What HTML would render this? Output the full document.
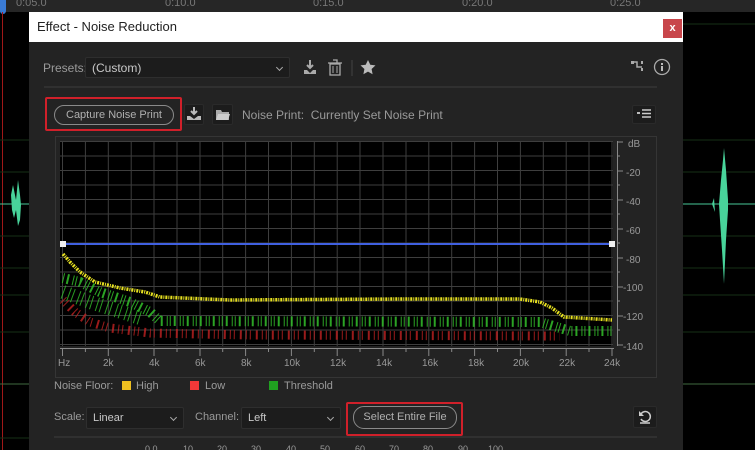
<!DOCTYPE html>
<html><head><meta charset="utf-8"><style>
*{margin:0;padding:0;box-sizing:border-box}
body{width:755px;height:450px;overflow:hidden;background:#000;font-family:"Liberation Sans",sans-serif;position:relative}
.abs{position:absolute}
.t{color:#9a9a9a;font-size:11px;position:absolute;white-space:nowrap}
.dd{position:absolute;background:#1c1c1c;border:1px solid #2e2e2e;border-radius:2px;color:#c8c8c8;font-size:11px;padding:4px 6px}
.car{position:absolute;right:7px;top:7px;width:5px;height:5px;border-right:1px solid #aaa;border-bottom:1px solid #aaa;transform:rotate(45deg)}
.pill{position:absolute;border:1px solid #8a8a8a;border-radius:11px;color:#b0b0b0;font-size:11px;text-align:center;background:#262626}
.red{position:absolute;border:2px solid #d0202a;border-radius:2px}
.ib{position:absolute;background:#1c1c1c;border:1px solid #2a2a2a;border-radius:2px}
</style></head><body>
<div class="abs" style="left:0;top:0;width:755px;height:12px;background:#262626"></div>
<div class="t" style="left:16px;top:-3px;color:#777">0:05.0</div>
<div class="t" style="left:165px;top:-3px;color:#777">0:10.0</div>
<div class="t" style="left:313px;top:-3px;color:#777">0:15.0</div>
<div class="t" style="left:462px;top:-3px;color:#777">0:20.0</div>
<div class="t" style="left:610px;top:-3px;color:#777">0:25.0</div>
<div class="abs" style="left:0;top:0;width:6px;height:14px;background:#3a7bd5;border-radius:0 0 3px 3px"></div>
<div class="abs" style="left:2px;top:12px;width:1px;height:438px;background:#a01818"></div>
<svg class="abs" style="left:0;top:0" width="755" height="450">
<g stroke="#163016">
<line x1="0" y1="140" x2="29" y2="140"/><line x1="0" y1="172" x2="29" y2="172"/><line x1="0" y1="236" x2="29" y2="236"/><line x1="0" y1="268" x2="29" y2="268"/><line x1="0" y1="295" x2="29" y2="295"/><line x1="0" y1="332" x2="29" y2="332"/><line x1="0" y1="438" x2="29" y2="438"/>
<line x1="683" y1="140" x2="755" y2="140"/><line x1="683" y1="172" x2="755" y2="172"/><line x1="683" y1="236" x2="755" y2="236"/><line x1="683" y1="268" x2="755" y2="268"/><line x1="683" y1="295" x2="755" y2="295"/><line x1="683" y1="332" x2="755" y2="332"/><line x1="683" y1="24" x2="755" y2="24"/>
</g>
<line x1="0" y1="384" x2="29" y2="384" stroke="#3f6a3f"/><line x1="683" y1="384" x2="755" y2="384" stroke="#3f6a3f"/>
<line x1="0" y1="204" x2="29" y2="204" stroke="#48c898"/><line x1="683" y1="204" x2="755" y2="204" stroke="#48c898"/>
<path d="M11 195 L13 185 L15 195 L16 200 L18 180 L20 195 L21 205 L20 220 L18 226 L16 210 L14 218 L12 210 Z" fill="#48d39a"/>
<path d="M719 204 L721 180 L723 160 L724 148 L726 170 L728 200 L728 210 L726 240 L724 284 L722 250 L720 220 Z M712 204 L714 198 L715 212 Z" fill="#48d39a"/>
</svg>

<div class="abs" style="left:29px;top:12px;width:654px;height:438px;background:#232323"></div>
<div class="abs" style="left:29px;top:12px;width:654px;height:30px;background:#fff"></div>
<div class="abs" style="left:37px;top:19px;font-size:13px;color:#222">Effect - Noise Reduction</div>
<div class="abs" style="left:663px;top:19px;width:19px;height:19px;background:#c8464b;color:#fff;font-size:11px;text-align:center;line-height:18px;font-weight:bold">x</div>

<div class="t" style="left:43px;top:61px;font-size:12px">Presets:</div>
<div class="dd" style="left:85px;top:57px;width:205px;height:21px;font-size:12px;padding:3px 6px">(Custom)<span class="car"></span></div>
<svg class="abs" style="left:302px;top:58px" width="80" height="20">
<path d="M8 2v8M5 7l3 3 3-3" stroke="#aaa" stroke-width="2" fill="none"/><path d="M2 12h3l3 3 3-3h3v4H2z" fill="#aaa"/>
<rect x="28" y="6" width="10" height="11" fill="none" stroke="#aaa" stroke-width="1.3"/><path d="M26 5h14M31 2h4v3" stroke="#aaa" fill="none" stroke-width="1.3"/><path d="M31 8v7M35 8v7" stroke="#aaa"/>
<line x1="50" y1="2" x2="50" y2="18" stroke="#333" stroke-width="2"/>
<path d="M66 2l2.3 4.8 5.2.6-3.9 3.6 1 5.2-4.6-2.6-4.6 2.6 1-5.2-3.9-3.6 5.2-.6z" fill="#bbb"/>
</svg>
<svg class="abs" style="left:630px;top:58px" width="42" height="20">
<rect x="1" y="3" width="3" height="3" fill="#aaa"/><path d="M4 4h3v5h5" stroke="#aaa" fill="none" stroke-width="1.5"/><rect x="11" y="3" width="2" height="3" fill="#aaa"/><rect x="11" y="10" width="2" height="3" fill="#aaa"/>
<circle cx="32" cy="9" r="7.5" stroke="#aaa" fill="none" stroke-width="1.3"/><rect x="31" y="8" width="2" height="5" fill="#bbb"/><rect x="31" y="5" width="2" height="2" fill="#bbb"/>
</svg>
<div class="abs" style="left:44px;top:86px;width:613px;height:2px;background:#303030"></div>

<div class="red" style="left:45px;top:97px;width:137px;height:34px"></div>
<div class="pill" style="left:54px;top:105px;width:120px;height:20px;line-height:18px">Capture Noise Print</div>
<div class="ib" style="left:184px;top:104px;width:20px;height:21px"></div>
<svg class="abs" style="left:186px;top:106px" width="16" height="16"><path d="M8 1v7M5 5l3 3 3-3" stroke="#bbb" stroke-width="2" fill="none"/><path d="M1 10h3l4 3 4-3h3v4H1z" fill="#bbb"/></svg>
<div class="ib" style="left:212px;top:104px;width:21px;height:21px"></div>
<svg class="abs" style="left:215px;top:108px" width="16" height="13"><path d="M1 2h5l1 2h7v8H1z" fill="#aaa"/><path d="M3 6h12l-2 6H1z" fill="#ccc"/></svg>
<div class="t" style="left:242px;top:108px;font-size:12px">Noise Print:&nbsp; Currently Set Noise Print</div>
<div class="ib" style="left:632px;top:105px;width:24px;height:19px"></div>
<svg class="abs" style="left:637px;top:109px" width="16" height="11"><rect x="0" y="3" width="3" height="2" fill="#bbb"/><path d="M5 1h9M5 4.5h9M5 8h9" stroke="#ccc" stroke-width="1.4"/></svg>

<div class="abs" style="left:55px;top:136px;width:602px;height:242px;border:1px solid #353535"></div>
<svg class="abs" style="left:0;top:0" width="755" height="450">
<rect x="60" y="141" width="553" height="205" fill="#000"/>
<g stroke="#3e3e3e" stroke-width="1">
<path d="M60 141.5h553M60 156h553M60 170.5h553M60 185h553M60 199.5h553M60 214h553M60 228.5h553M60 243h553M60 257.5h553M60 272h553M60 286.5h553M60 301h553M60 315.5h553M60 330h553M60 344.5h553"/>
<path d="M62.5 141v205M85.4 141v205M108.3 141v205M131.2 141v205M154 141v205M177 141v205M200 141v205M222.7 141v205M245.6 141v205M268.5 141v205M291.4 141v205M314.3 141v205M337.2 141v205M360 141v205M383 141v205M406 141v205M428.8 141v205M451.7 141v205M474.6 141v205M497.5 141v205M520.4 141v205M543.3 141v205M566.2 141v205M589 141v205M612 141v205"/>
</g>
<g stroke="#888">
<path d="M60 348.5h554M62.5 348v8M85.4 348v4M108.3 348v8M131.2 348v4M154 348v8M177 348v4M200 348v8M222.7 348v4M245.6 348v8M268.5 348v4M291.4 348v8M314.3 348v4M337.2 348v8M360 348v4M383 348v8M406 348v4M428.8 348v8M451.7 348v4M474.6 348v8M497.5 348v4M520.4 348v8M543.3 348v4M566.2 348v8M589 348v4M612 348v8"/>
<path d="M617.5 141v205M617 142h6M617 156h3M617 171h6M617 185h3M617 200h6M617 214h3M617 229h6M617 243h3M617 258h6M617 272h3M617 287h6M617 301h3M617 316h6M617 330h3M617 345h6"/>
</g>
<g fill="none">
<path d="M63 300 L75 312 L90 322 L110 328 L150 333 L250 335 L560 336" stroke="#c02222" stroke-width="9" stroke-dasharray="1 3 1 5 2 4" opacity="0.8"/>
<path d="M63 278 L80 282 L100 292 L130 302 L150 312 L160 321 L540 322 L560 328 L570 331 L612 331" stroke="#33c02a" stroke-width="10" stroke-dasharray="1 3 2 4 1 2" opacity="0.85"/>
<path d="M63 292 L90 302 L140 318" stroke="#33c02a" stroke-width="14" stroke-dasharray="1 5 1 3" opacity="0.8"/>
<path d="M63 254 L70 262 L80 272 L95 282 L120 288 L145 292 L160 297 L230 300 L400 299 L520 299 L540 302 L552 308 L564 317 L612 320" stroke="#e6e020" stroke-width="3.5" stroke-dasharray="2 1 1 1"/>
</g>
<line x1="63" y1="244" x2="612" y2="244" stroke="#4060e0" stroke-width="2"/>
<rect x="60" y="241" width="6" height="6" fill="#eee"/><rect x="609" y="241" width="6" height="6" fill="#eee"/>
<g fill="#999" font-size="10" font-family="Liberation Sans">
<text x="628" y="147">dB</text><text x="626" y="176">-20</text><text x="626" y="205">-40</text><text x="626" y="234">-60</text><text x="626" y="263">-80</text><text x="623" y="291">-100</text><text x="623" y="320">-120</text><text x="623" y="350">-140</text>
<text x="58" y="366">Hz</text><text x="103" y="366">2k</text><text x="149" y="366">4k</text><text x="195" y="366">6k</text><text x="241" y="366">8k</text><text x="284" y="366">10k</text><text x="330" y="366">12k</text><text x="376" y="366">14k</text><text x="422" y="366">16k</text><text x="468" y="366">18k</text><text x="513" y="366">20k</text><text x="559" y="366">22k</text><text x="604" y="366">24k</text>
</g>
<g fill="#999" font-size="9" font-family="Liberation Sans">
<text x="145" y="452">0.0</text><text x="183" y="452">10</text><text x="217" y="452">20</text><text x="251" y="452">30</text><text x="286" y="452">40</text><text x="320" y="452">50</text><text x="355" y="452">60</text><text x="389" y="452">70</text><text x="423" y="452">80</text><text x="458" y="452">90</text><text x="488" y="452">100</text>
</g>
</svg>

<div class="t" style="left:54px;top:380px">Noise Floor:</div>
<div class="abs" style="left:122px;top:381px;width:9px;height:9px;background:#f0c020"></div>
<div class="t" style="left:136px;top:380px">High</div>
<div class="abs" style="left:190px;top:381px;width:9px;height:9px;background:#f03838"></div>
<div class="t" style="left:205px;top:380px">Low</div>
<div class="abs" style="left:269px;top:381px;width:9px;height:9px;background:#20a020"></div>
<div class="t" style="left:284px;top:380px">Threshold</div>

<div class="t" style="left:54px;top:411px">Scale:</div>
<div class="dd" style="left:86px;top:407px;width:98px;height:22px">Linear<span class="car"></span></div>
<div class="t" style="left:195px;top:411px">Channel:</div>
<div class="dd" style="left:241px;top:407px;width:100px;height:22px">Left<span class="car"></span></div>
<div class="red" style="left:346px;top:402px;width:117px;height:34px"></div>
<div class="pill" style="left:353px;top:406px;width:104px;height:23px;line-height:21px">Select Entire File</div>
<div class="ib" style="left:633px;top:406px;width:24px;height:22px"></div>
<svg class="abs" style="left:638px;top:409px" width="14" height="16"><path d="M3 5a5 5 0 1 1 0 5" stroke="#ccc" stroke-width="1.5" fill="none"/><path d="M1 2v5h5z" fill="#ccc"/><path d="M2 14h10" stroke="#ccc" stroke-width="1.5"/></svg>
<div class="abs" style="left:54px;top:436px;width:603px;height:2px;background:#303030"></div>
</body></html>
